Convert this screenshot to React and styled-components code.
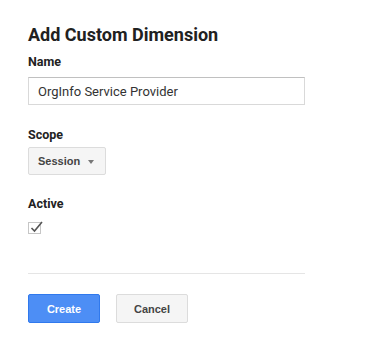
import React from "react";
import styled, { createGlobalStyle } from "styled-components";

const GlobalStyle = createGlobalStyle`
  body {
    margin: 0;
    background: #fff;
    font-family: Roboto, "Liberation Sans", Arial, sans-serif;
    color: #212121;
  }
`;

const Panel = styled.div`
  width: 366px;
  height: 352px;
  box-sizing: border-box;
  padding: 23px 0 0 28px;
`;

const Title = styled.h1`
  margin: 0;
  font-size: 18px;
  line-height: 24px;
  font-weight: 700;
  color: #212121;
`;

const Field = styled.div`
  margin-top: ${(p) => p.gap || 0}px;
`;

const Label = styled.div`
  font-size: 12.5px;
  line-height: 16px;
  font-weight: 700;
  color: #222;
  margin-bottom: ${(p) => p.space || 6}px;
`;

const TextInput = styled.input`
  display: block;
  width: 277px;
  height: 28px;
  box-sizing: border-box;
  border: 1px solid #d9d9d9;
  border-top-color: #c0c0c0;
  padding: 0 9px;
  font-family: Roboto, "Liberation Sans", Arial, sans-serif;
  font-size: 13px;
  color: #333;
  outline: none;
`;

const Select = styled.div`
  display: inline-flex;
  align-items: center;
  justify-content: space-between;
  width: 78px;
  height: 28px;
  box-sizing: border-box;
  padding: 0 9px;
  border: 1px solid #dcdcdc;
  border-radius: 2px;
  background: #f5f5f5;
  font-family: "Liberation Sans", Arial, sans-serif;
  font-size: 11px;
  font-weight: 700;
  color: #444;
`;

const Arrow = styled.span`
  width: 0;
  height: 0;
  border-left: 3.5px solid transparent;
  border-right: 3.5px solid transparent;
  border-top: 4px solid #777;
  margin-right: 2px;
  margin-top: 1px;
`;

const Check = styled.div`
  position: relative;
  width: 13px;
  height: 12px;
  box-sizing: border-box;
  border: 1px solid #c6c6c6;
  background: #fff;
`;

const CheckMark = styled.svg`
  position: absolute;
  left: 1px;
  top: -3px;
`;

const Divider = styled.hr`
  width: 277px;
  margin: 0;
  border: 0;
  border-top: 1px solid #e5e5e5;
`;

const Actions = styled.div`
  display: flex;
  gap: 16px;
  margin-top: 20px;
`;

const Button = styled.button`
  width: 72px;
  height: 29px;
  box-sizing: border-box;
  border-radius: 2px;
  font-family: "Liberation Sans", Arial, sans-serif;
  font-size: 11px;
  font-weight: 700;
  cursor: pointer;
  border: 1px solid ${(p) => (p.primary ? "#3079ed" : "#dcdcdc")};
  background: ${(p) => (p.primary ? "#4d8ef5" : "#f5f5f5")};
  color: ${(p) => (p.primary ? "#fff" : "#444")};
`;

export default function App() {
  return (
    <>
      <GlobalStyle />
      <Panel>
        <Title>Add Custom Dimension</Title>
        <Field gap={7}>
          <Label space={7}>Name</Label>
          <TextInput defaultValue="OrgInfo Service Provider" />
        </Field>
        <Field gap={22}>
          <Label space={4}>Scope</Label>
          <Select>
            Session
            <Arrow />
          </Select>
        </Field>
        <Field gap={21}>
          <Label space={10}>Active</Label>
          <Check>
            <CheckMark width="14" height="13" viewBox="0 0 14 13">
              <path d="M1.5 8 L4.5 11 L12 2" fill="none" stroke="#555" strokeWidth="1.6" />
            </CheckMark>
          </Check>
        </Field>
        <Field gap={39}>
          <Divider />
        </Field>
        <Actions>
          <Button primary>Create</Button>
          <Button>Cancel</Button>
        </Actions>
      </Panel>
    </>
  );
}
